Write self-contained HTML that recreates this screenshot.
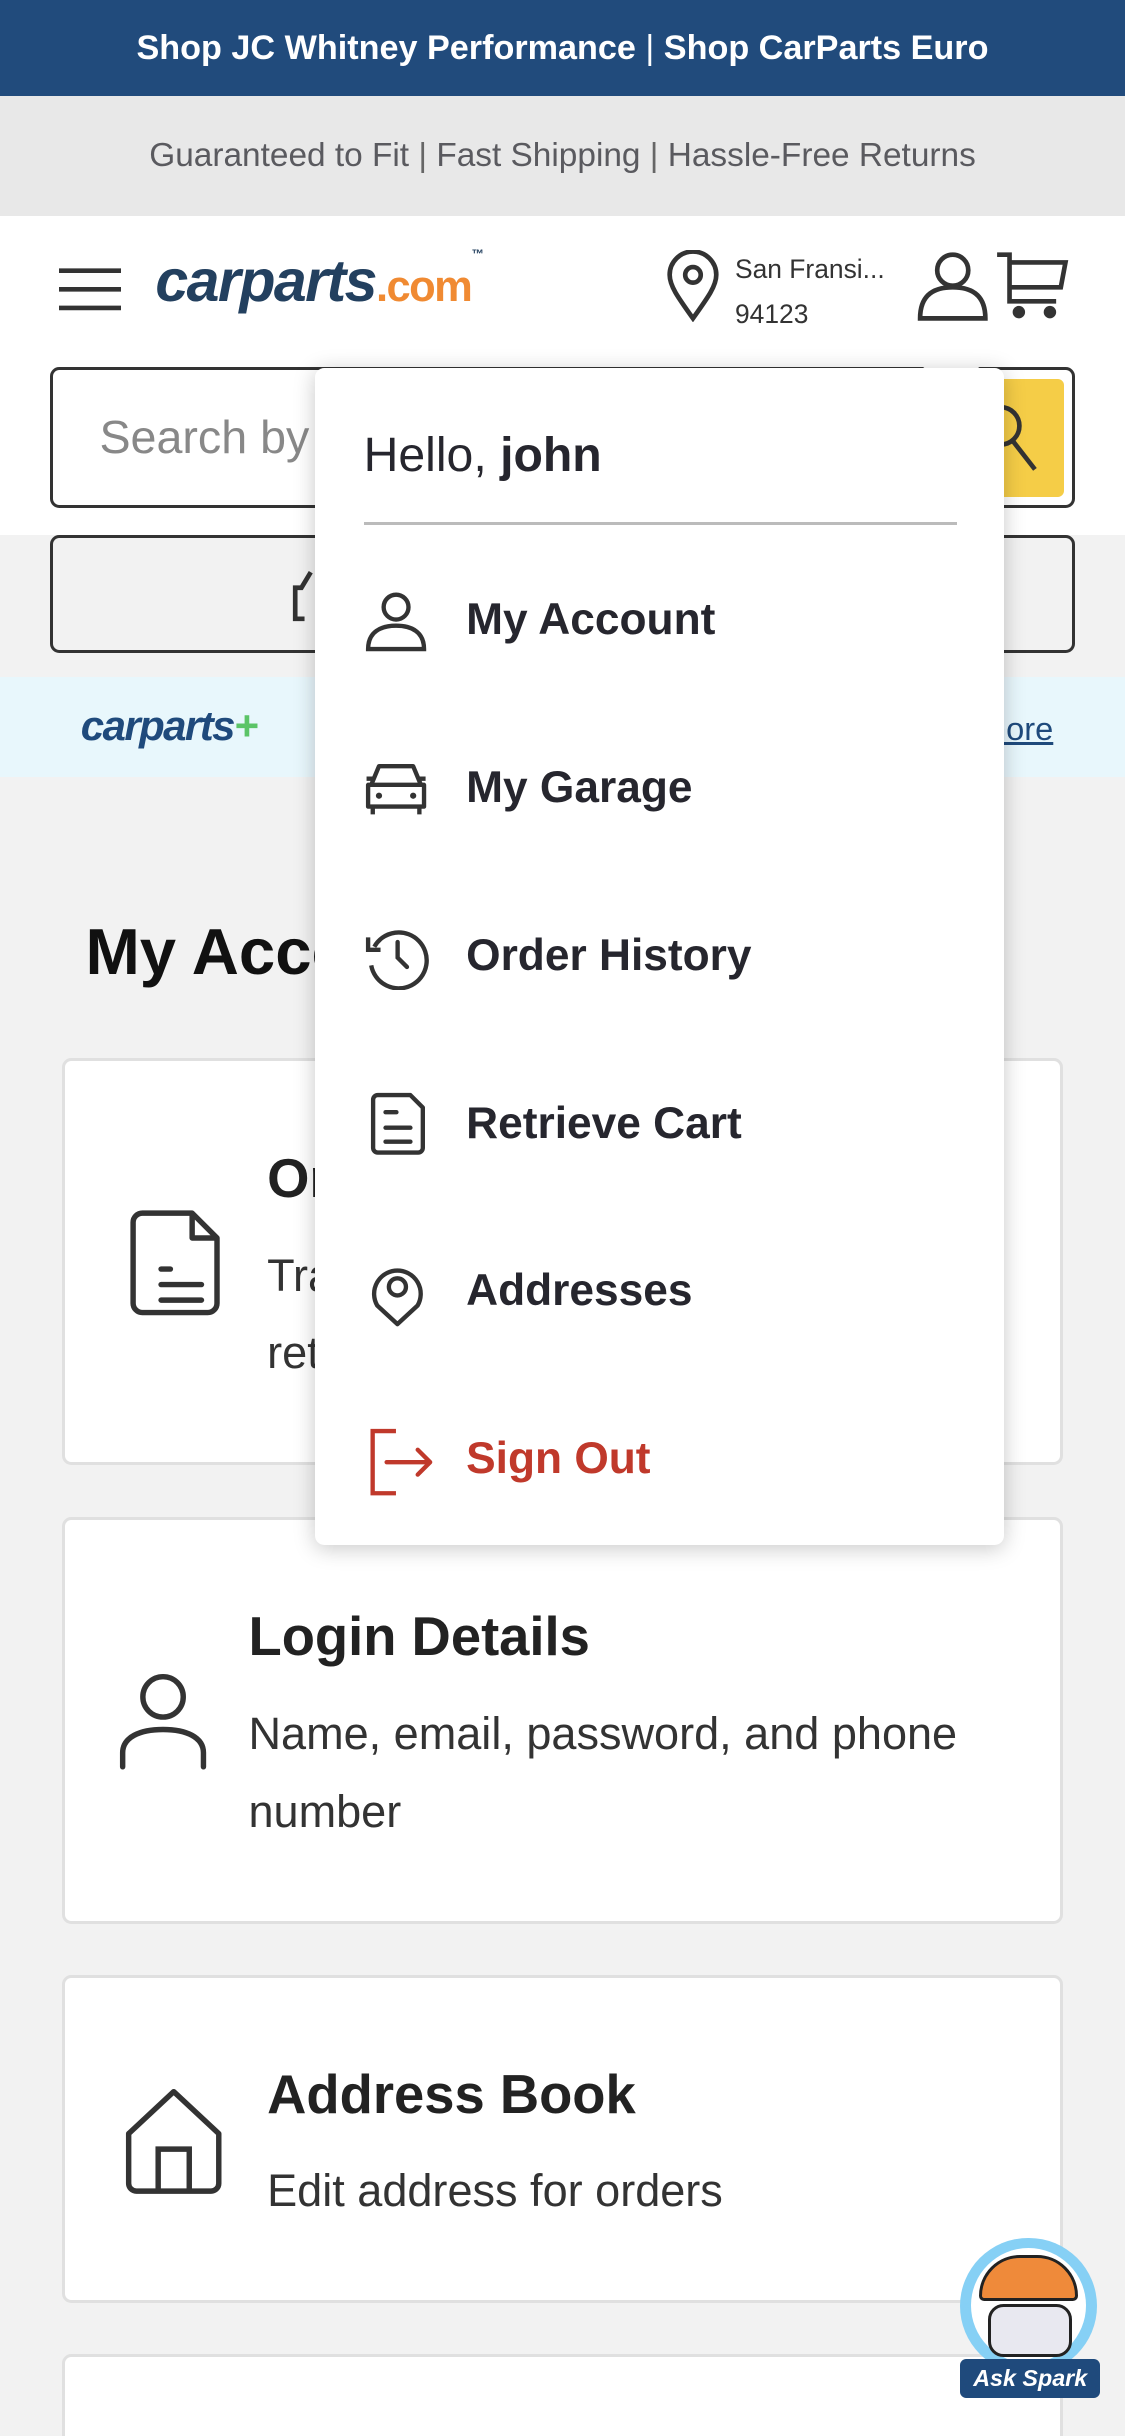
<!DOCTYPE html>
<html><head><meta charset="utf-8"><style>
*{margin:0;padding:0;box-sizing:border-box}
html,body{width:1125px;height:2436px;overflow:hidden;background:#f2f2f2}
#w{zoom:1.55387;width:724px;height:1568px;position:relative;font-family:"Liberation Sans",sans-serif;color:#222;background:#f2f2f2;overflow:hidden}
.a{position:absolute}
.top{left:0;top:0;width:724px;height:62px;background:#214b7c;color:#fff;font-weight:bold;font-size:22px;text-align:center;line-height:62px}
.gray{left:0;top:62px;width:724px;height:77px;background:#e8e8e8;color:#5a5a5f;font-size:21.5px;text-align:center;line-height:77px}
.hdr{left:0;top:139px;width:724px;height:205px;background:#fff}
.box{border:2px solid #333;border-radius:6px}
.card{left:40px;width:644px;background:#fff;border:2px solid #e0e0e0;border-radius:6px}
.ct{font-size:35px;font-weight:bold;color:#222}
.cd{font-size:29px;color:#333;line-height:50px}
.dd{left:203px;top:237px;width:443px;height:757px;background:#fff;border-radius:6px;box-shadow:0 2px 14px rgba(0,0,0,.22)}
.it{left:97px;font-size:28.5px;font-weight:bold;color:#26262e}
.ic{left:32px}
</style></head><body><div id="w">
<div class="a top">Shop JC Whitney Performance <span style="font-weight:normal">|</span> Shop CarParts Euro</div>
<div class="a gray">Guaranteed to Fit <span style="color:#666">|</span> Fast Shipping <span style="color:#666">|</span> Hassle-Free Returns</div>
<div class="a hdr">
 <svg class="a" style="left:38px;top:32px" width="40" height="30"><g stroke="#333" stroke-width="3"><line x1="0" y1="3" x2="40" y2="3"/><line x1="0" y1="15" x2="40" y2="15"/><line x1="0" y1="27" x2="40" y2="27"/></g></svg>
 <div class="a" style="left:100px;top:20px;font-size:38px;font-weight:bold;font-style:italic;color:#23405f;letter-spacing:-1px">carparts<span style="color:#f08a32;font-size:28px;font-style:normal">.com</span><span style="font-size:8px;vertical-align:top">™</span></div>
 <svg class="a" style="left:428px;top:22px" width="36" height="46" viewBox="0 0 36 46"><path d="M18 44 C8 30 3 23 3 16 A15 15 0 0 1 33 16 C33 23 28 30 18 44Z" fill="none" stroke="#333" stroke-width="3"/><circle cx="18" cy="16" r="5" fill="none" stroke="#333" stroke-width="3"/></svg>
 <div class="a" style="left:473px;top:20px;font-size:17px;color:#333;line-height:29px">San Fransi...<br>94123</div>
 <svg class="a" style="left:590px;top:22px" width="46" height="46" viewBox="0 0 46 46"><circle cx="23" cy="13" r="10" fill="none" stroke="#333" stroke-width="3"/><path d="M2 44 C2 28 12 24 23 24 C34 24 44 28 44 44Z" fill="none" stroke="#333" stroke-width="3"/></svg>
 <svg class="a" style="left:640px;top:22px" width="48" height="46" viewBox="0 0 48 46"><path d="M2 3 H10 V33 H40 M10 8 H46 L43 24 H10" fill="none" stroke="#333" stroke-width="3"/><circle cx="16" cy="40" r="4" fill="#333"/><circle cx="36" cy="40" r="4" fill="#333"/></svg>
</div>
<div class="a box" style="left:32px;top:236px;width:660px;height:91px;background:#fff"></div>
<div class="a" style="left:64px;top:264px;font-size:30px;color:#888">Search by</div>
<div class="a" style="left:626px;top:244px;width:59px;height:76px;background:#f5cd47;border-radius:4px"></div>
<svg class="a" style="left:630px;top:258px" width="40" height="48"><circle cx="14" cy="16" r="12" fill="none" stroke="#333" stroke-width="3"/><line x1="22" y1="26" x2="36" y2="44" stroke="#333" stroke-width="3"/></svg>
<div class="a box" style="left:32px;top:344px;width:660px;height:76px;background:#f2f2f2"></div>
<svg class="a" style="left:186px;top:364px" width="20" height="38"><path d="M14 4 L8 14 H4 V34 H10" fill="none" stroke="#333" stroke-width="3"/></svg>
<div class="a" style="left:0;top:436px;width:724px;height:64px;background:#e8f7fc"></div>
<div class="a" style="left:52px;top:452px;font-size:27px;font-weight:bold;font-style:italic;color:#1f4a7c;letter-spacing:-1px">carparts<span style="color:#5bc467">+</span></div>
<div class="a" style="left:630px;top:457px;font-size:21px;color:#1f4a7c;text-decoration:underline">more</div>
<div class="a" style="left:55px;top:588px;font-size:42px;font-weight:bold;color:#111">My Account</div>
<div class="a card" style="top:681px;height:262px">
 <svg class="a" style="left:42px;top:96px" width="60" height="70" viewBox="0 0 60 70"><path d="M8 2 H40 L56 18 V60 A6 6 0 0 1 50 66 H8 A6 6 0 0 1 2 60 V8 A6 6 0 0 1 8 2Z M40 2 V18 H56" fill="none" stroke="#333" stroke-width="3.5" stroke-linejoin="round"/><g stroke="#333" stroke-width="3.5" stroke-linecap="round"><line x1="20" y1="38" x2="26" y2="38"/><line x1="20" y1="58" x2="46" y2="58"/><line x1="20" y1="48" x2="46" y2="48"/></g></svg>
 <div class="a ct" style="left:130px;top:55px">Order History</div>
 <div class="a cd" style="left:130px;top:113px">Track, manage and<br>return orders</div>
</div>
<div class="a card" style="top:976px;height:262px">
 <svg class="a" style="left:34px;top:98px" width="58" height="64" viewBox="0 0 58 64"><circle cx="29" cy="16" r="13" fill="none" stroke="#333" stroke-width="3.5"/><path d="M3 61 V52 C3 42 14 37 29 37 C44 37 55 42 55 52 V61" fill="none" stroke="#333" stroke-width="3.5" stroke-linecap="round"/></svg>
 <div class="a ct" style="left:118px;top:55px">Login Details</div>
 <div class="a cd" style="left:118px;top:113px">Name, email, password, and phone<br>number</div>
</div>
<div class="a card" style="top:1271px;height:211px">
 <svg class="a" style="left:38px;top:70px" width="64" height="70" viewBox="0 0 64 70"><path d="M3 30 L32 3 L61 30 V62 A5 5 0 0 1 56 67 H8 A5 5 0 0 1 3 62Z" fill="none" stroke="#333" stroke-width="3.5" stroke-linejoin="round"/><path d="M22 67 V40 H42 V67" fill="none" stroke="#333" stroke-width="3.5"/></svg>
 <div class="a ct" style="left:130px;top:55px">Address Book</div>
 <div class="a cd" style="left:130px;top:112px">Edit address for orders</div>
</div>
<div class="a card" style="top:1515px;height:100px"></div>
<svg class="a" style="left:590px;top:222px" width="44" height="18"><path d="M0 18 L22 0 L44 18Z" fill="#fff"/></svg>
<div class="a dd">
 <div class="a" style="left:31px;top:38px;font-size:31px;color:#26262e">Hello, <b>john</b></div>
 <div class="a" style="left:31px;top:99px;width:382px;height:2px;background:#bbb"></div>
 <svg class="a ic" style="top:143px" width="40" height="40" viewBox="0 0 40 40"><circle cx="20" cy="11" r="8" fill="none" stroke="#333" stroke-width="2.8"/><path d="M2 38 C2 27 10 23 20 23 C30 23 38 27 38 38Z" fill="none" stroke="#333" stroke-width="2.8"/></svg>
 <div class="a it" style="top:146px">My Account</div>
 <svg class="a ic" style="top:252px" width="40" height="36" viewBox="0 0 40 36"><path d="M4 16 L9 4 H31 L36 16 M2 16 H38 V30 H2Z M5 30 V35 M35 30 V35 M1 12 H5 M35 12 H39" fill="none" stroke="#333" stroke-width="2.8" stroke-linejoin="round"/><circle cx="9" cy="23" r="2" fill="#333"/><circle cx="31" cy="23" r="2" fill="#333"/></svg>
 <div class="a it" style="top:254px">My Garage</div>
 <svg class="a ic" style="top:358px" width="42" height="42" viewBox="0 0 42 42"><path d="M6 14 A18 18 0 1 1 4 26" fill="none" stroke="#333" stroke-width="2.8"/><path d="M2 8 V16 H10" fill="none" stroke="#333" stroke-width="2.8"/><path d="M21 11 V21 L27 27" fill="none" stroke="#333" stroke-width="2.8" stroke-linecap="round"/></svg>
 <div class="a it" style="top:362px">Order History</div>
 <svg class="a ic" style="top:466px;left:35px" width="36" height="42" viewBox="0 0 36 42"><path d="M5 2 H26 L34 10 V36 A3 3 0 0 1 31 39 H5 A3 3 0 0 1 2 36 V5 A3 3 0 0 1 5 2Z" fill="none" stroke="#333" stroke-width="2.8" stroke-linejoin="round"/><g stroke="#333" stroke-width="2.8" stroke-linecap="round"><line x1="10" y1="13" x2="17" y2="13"/><line x1="10" y1="23" x2="26" y2="23"/><line x1="10" y1="32" x2="26" y2="32"/></g></svg>
 <div class="a it" style="top:470px">Retrieve Cart</div>
 <svg class="a ic" style="top:575px;left:36px" width="34" height="42" viewBox="0 0 34 42"><path d="M17 40 L4 28 A15 15 0 1 1 30 28Z" fill="none" stroke="#333" stroke-width="2.8" stroke-linejoin="round"/><circle cx="17" cy="16" r="5.5" fill="none" stroke="#333" stroke-width="2.8"/></svg>
 <div class="a it" style="top:578px">Addresses</div>
 <svg class="a ic" style="top:682px;left:34px" width="44" height="44" viewBox="0 0 44 44"><path d="M18 2 H3 V42 H18" fill="none" stroke="#c0392b" stroke-width="2.8"/><path d="M12 22 H40 M32 14 L40 22 L32 30" fill="none" stroke="#c0392b" stroke-width="2.8" stroke-linecap="round" stroke-linejoin="round"/></svg>
 <div class="a it" style="top:686px;color:#c0392b">Sign Out</div>
</div>
<div class="a" style="left:618px;top:1440px;width:88px;height:88px;border-radius:50%;background:#86d0f5"></div>
<div class="a" style="left:625px;top:1447px;width:74px;height:74px;border-radius:50%;background:#fff"></div>
<div class="a" style="left:630px;top:1451px;width:64px;height:30px;border-radius:32px 32px 4px 4px;background:#ef8a3a;border:2px solid #222"></div>
<div class="a" style="left:636px;top:1483px;width:54px;height:34px;border-radius:10px;background:#e8e8f0;border:2px solid #222"></div>
<div class="a" style="left:618px;top:1518px;width:90px;height:25px;border-radius:4px;background:#1f4a7c;color:#fff;font-weight:bold;font-style:italic;font-size:15px;text-align:center;line-height:25px">Ask Spark</div>
</div></body></html>
